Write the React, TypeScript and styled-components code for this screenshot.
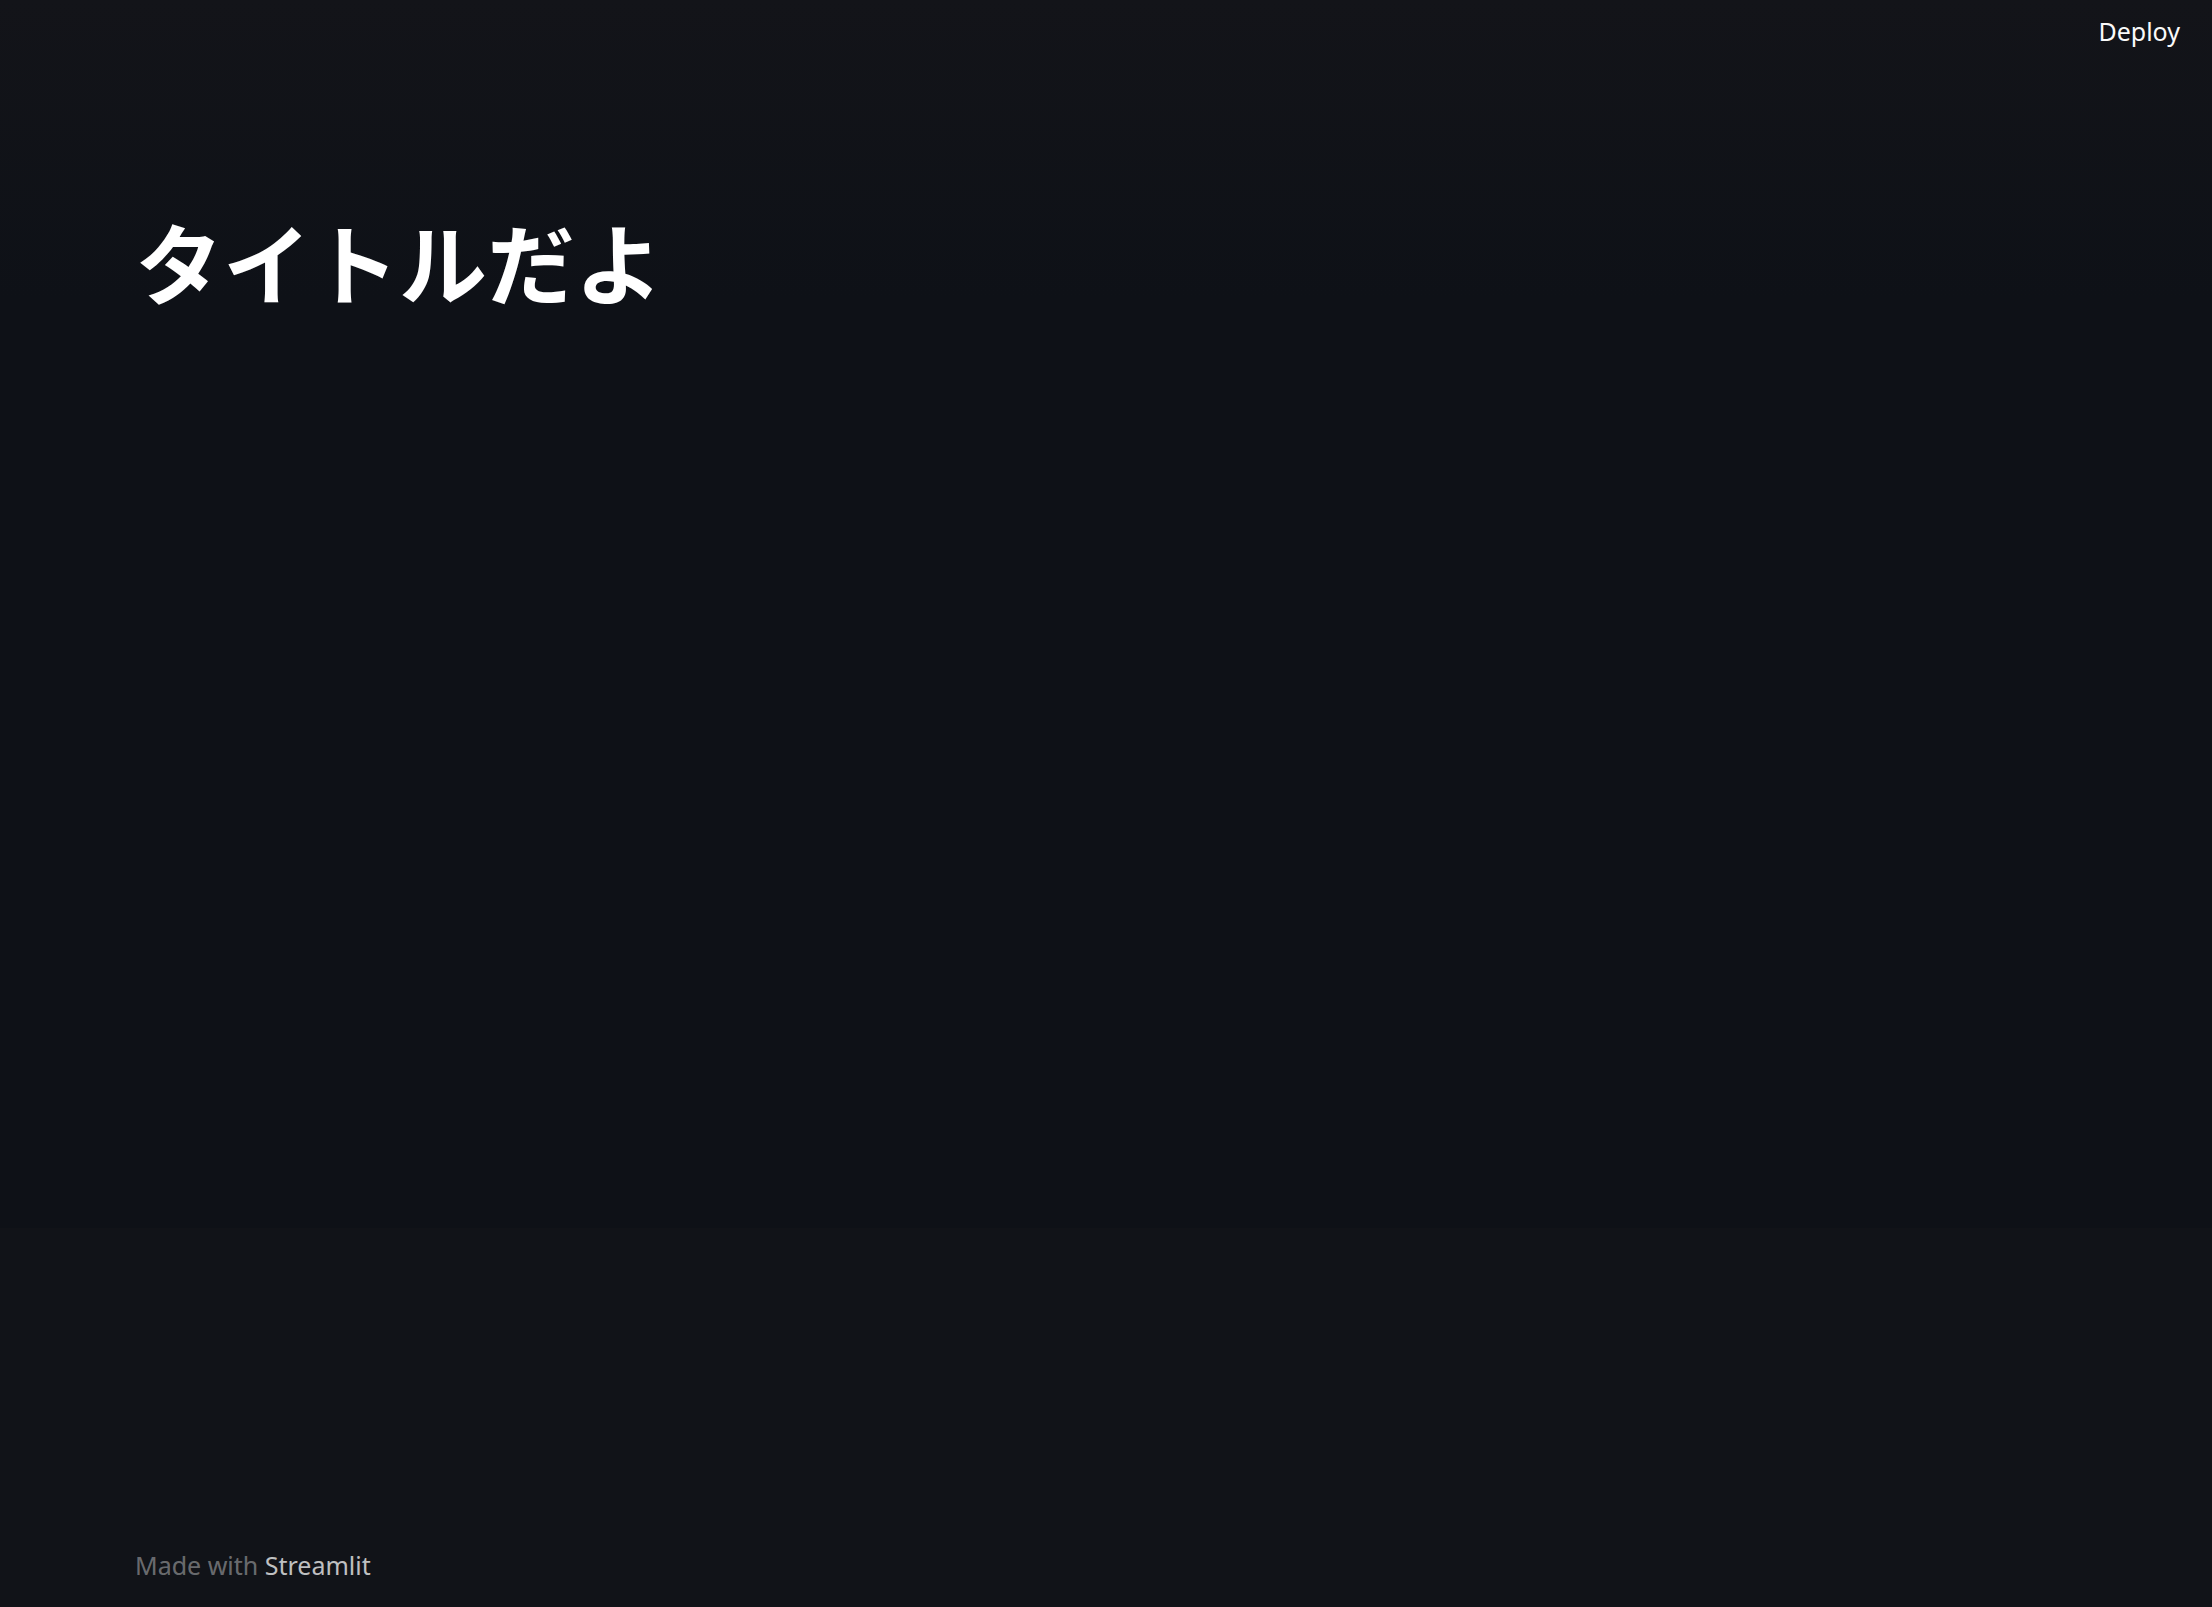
import * as React from 'react';
import styled, { createGlobalStyle } from 'styled-components';

const GlobalStyle = createGlobalStyle`
  html, body {
    margin: 0;
    padding: 0;
    background: #0e1117;
  }
  #root {
    min-height: 100vh;
  }
`;

const App = () => {
  return (
    <>
      <GlobalStyle />
      <Page>
        <Main>
          <Header>
            <DeployButton>Deploy</DeployButton>
          </Header>
          <Content>
            <Title>タイトルだよ</Title>
          </Content>
        </Main>
        <Footer>
          <FooterText>
            Made with <FooterLink>Streamlit</FooterLink>
          </FooterText>
        </Footer>
      </Page>
    </>
  );
};

export default App;

const Page = styled.div`
  min-height: 100vh;
  display: flex;
  flex-direction: column;
  font-family: 'Source Sans Pro', 'Noto Sans', 'Noto Sans CJK JP', sans-serif;
  color: #fafafa;
`;

const Main = styled.main`
  height: 1228px;
  display: flex;
  flex-direction: column;
  background-color: #0e1117;
  background-image: linear-gradient(180deg, #131419 0px, #0e1117 300px);
  background-repeat: no-repeat;
  background-size: 100% 300px;
`;

const Header = styled.header`
  height: 64px;
  display: flex;
  justify-content: flex-end;
  align-items: flex-start;
  padding: 0 32px 0 0;
`;

const DeployButton = styled.button`
  margin-top: 11px;
  padding: 0;
  border: none;
  background: transparent;
  color: #fafafa;
  font-family: inherit;
  font-size: 25px;
  line-height: 40px;
  cursor: pointer;
`;

const Content = styled.div`
  padding: 143px 135px 0;
`;

const Title = styled.h1`
  margin: 0;
  font-family: 'Noto Sans CJK JP', sans-serif;
  font-weight: 700;
  font-size: 88px;
  line-height: 1.2;
  color: #ffffff;
`;

const Footer = styled.footer`
  flex: 1;
  display: flex;
  flex-direction: column;
  justify-content: flex-end;
  padding: 0 135px 22px;
  background: #111318;
`;

const FooterText = styled.div`
  font-size: 25px;
  line-height: 40px;
  color: rgba(250, 250, 250, 0.4);
`;

const FooterLink = styled.a`
  color: rgba(250, 250, 250, 0.75);
  text-decoration: none;
`;
